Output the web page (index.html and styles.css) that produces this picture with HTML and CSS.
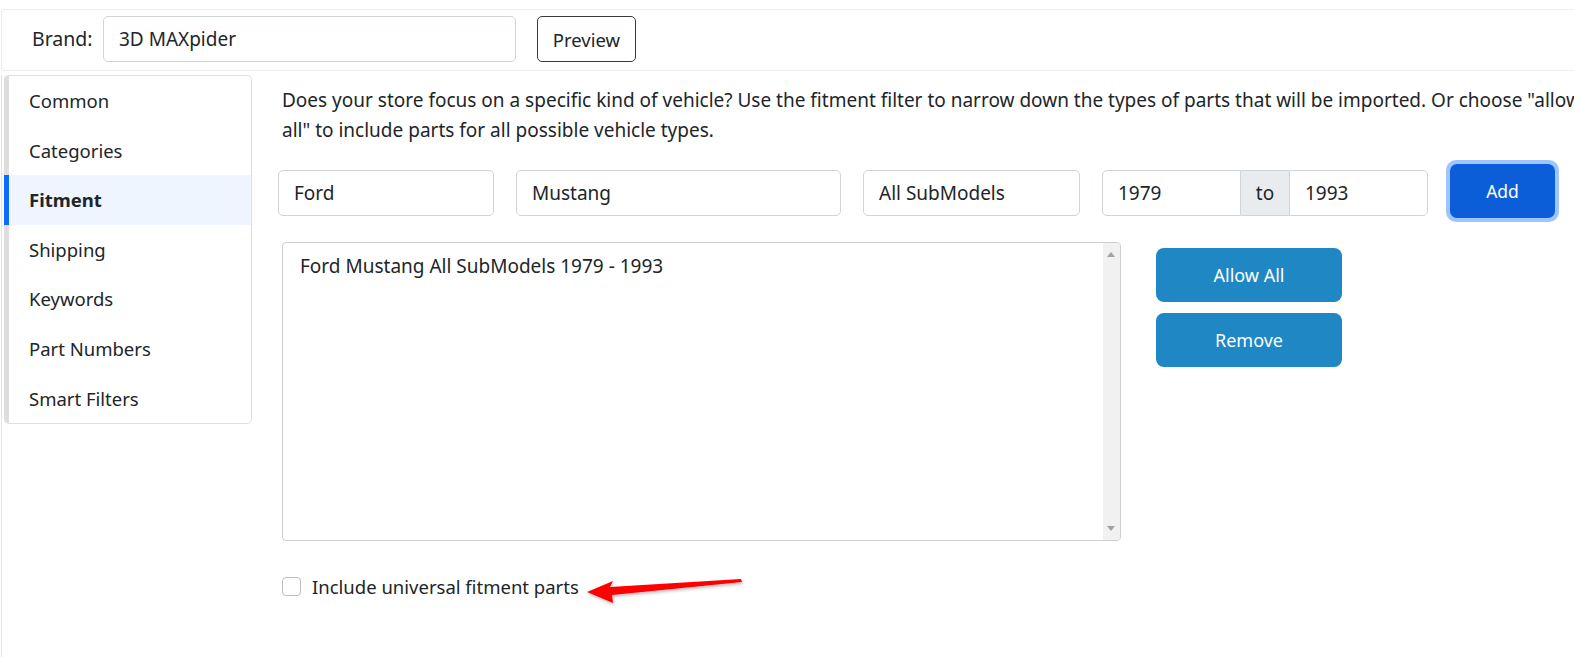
FILE: index.html
```html
<!DOCTYPE html>
<html lang="en">
<head>
<meta charset="utf-8">
<title>Fitment</title>
<link rel="stylesheet" href="styles.css">
</head>
<body>
<div class="topbar">
  <span class="brand-label">Brand:</span>
  <div class="field brand-input">3D MAXpider</div>
  <button class="btn-outline">Preview</button>
</div>
<div class="layout">
  <nav class="sidenav">
    <div class="nav-item">Common</div>
    <div class="nav-item">Categories</div>
    <div class="nav-item active">Fitment</div>
    <div class="nav-item">Shipping</div>
    <div class="nav-item">Keywords</div>
    <div class="nav-item">Part Numbers</div>
    <div class="nav-item">Smart Filters</div>
  </nav>
  <main class="content">
    <p class="intro">Does your store focus on a specific kind of vehicle? Use the fitment filter to narrow down the types of parts that will be imported. Or choose "allow all" to include parts for all possible vehicle types.</p>
    <div class="filter-row">
      <div class="field f-make">Ford</div>
      <div class="field f-model">Mustang</div>
      <div class="field f-sub">All SubModels</div>
      <div class="year-group">
        <div class="field year">1979</div>
        <div class="addon">to</div>
        <div class="field year">1993</div>
      </div>
      <div class="focus-ring"><button class="btn-add">Add</button></div>
    </div>
    <div class="list-row">
      <div class="listbox">
        <div class="list-items">
          <div class="list-item">Ford Mustang All SubModels 1979 - 1993</div>
        </div>
        <div class="scrollbar">
          <span class="arrow-up"></span>
          <span class="arrow-down"></span>
        </div>
      </div>
      <div class="actions">
        <button class="btn-blue">Allow All</button>
        <button class="btn-blue">Remove</button>
      </div>
    </div>
    <label class="check">
      <span class="check-box"></span>
      <span class="check-text">Include universal fitment parts</span>
    </label>
  </main>
</div>
<svg class="annot-arrow" width="175" height="44" viewBox="0 0 175 44">
  <defs>
    <filter id="sh" x="-10%" y="-40%" width="130%" height="200%">
      <feDropShadow dx="1" dy="2" stdDeviation="1.6" flood-color="#000" flood-opacity="0.25"/>
    </filter>
  </defs>
  <polygon filter="url(#sh)" fill="#ff0000" points="7,20 33,9 30,15 161,7 162,10 32,23 33,31"/>
</svg>
</body>
</html>
```

FILE: styles.css
```css
* { box-sizing: border-box; }
html, body { margin: 0; padding: 0; background: #fff; }
body {
  font-family: "Noto Sans", "Segoe UI", Arial, sans-serif;
  color: #212529;
  font-size: 19px;
  width: 1574px;
  height: 657px;
  overflow: hidden;
  position: relative;
}
button { font-family: inherit; }

.topbar {
  margin-top: 9px;
  margin-left: 1px;
  height: 62px;
  border: 1px solid #ececec;
  border-right: none;
  border-radius: 4px 0 0 4px;
  display: flex;
  align-items: flex-start;
  padding: 6px 0 0 30px;
}
.brand-label {
  height: 46px;
  line-height: 46px;
  font-size: 19.5px;
  width: 71px;
}
.field {
  height: 46px;
  border: 1px solid #ced4da;
  border-radius: 5px;
  background: #fff;
  padding: 0 15px;
  line-height: 44px;
  font-size: 19px;
  white-space: nowrap;
}
.brand-input { width: 413px; }
.btn-outline {
  margin-left: 21px;
  width: 99px;
  height: 46px;
  border: 1px solid #343a40;
  border-radius: 5px;
  background: #fff;
  color: #212529;
  font-size: 18.5px;
  padding: 0;
}

.layout {
  display: flex;
  align-items: flex-start;
  margin-left: 1px;
  margin-top: 4px;
  border-left: 1px solid #e4e4e4;
  height: 600px;
  padding-left: 2px;
}
.sidenav {
  width: 248px;
  flex: none;
  border: 1px solid #dfdfdf;
  border-left: 5px solid #dedede;
  border-radius: 5px;
  padding: 0;
}
.nav-item {
  height: 49.6px;
  line-height: 50.5px;
  padding-left: 20px;
  font-size: 18.5px;
  margin-left: -5px;
  border-left: 5px solid transparent;
}
.nav-item.active {
  background: #eef5ff;
  border-left-color: #0d6efd;
  font-weight: 700;
}

.content {
  flex: none;
  width: 1400px;
  margin-left: 26px;
}
.intro {
  margin: 11px 0 0 4px;
  line-height: 29.5px;
  font-size: 19px;
  width: 1305px;
}
.filter-row {
  display: flex;
  align-items: center;
  margin-top: 16px;
  height: 64px;
}
.f-make { width: 216px; }
.f-model { width: 325px; margin-left: 22px; }
.f-sub { width: 217px; margin-left: 22px; }
.year-group {
  display: flex;
  margin-left: 22px;
  width: 326px;
}
.year-group .field.year { width: 139px; }
.year-group .field.year:first-child { border-radius: 5px 0 0 5px; }
.year-group .field.year:last-child { border-radius: 0 5px 5px 0; }
.addon {
  width: 48px;
  height: 46px;
  line-height: 44px;
  text-align: center;
  background: #e9ecef;
  border-top: 1px solid #ced4da;
  border-bottom: 1px solid #ced4da;
  font-size: 19px;
}
.focus-ring {
  margin-left: 18px;
  margin-top: -5px;
  padding: 4px;
  background: #9ec5fe;
  border-radius: 10px;
}
.btn-add {
  display: block;
  width: 105px;
  height: 54px;
  border: none;
  border-radius: 7px;
  background: #0b5ed7;
  color: #fff;
  font-size: 17.5px;
  padding: 0;
}

.list-row {
  display: flex;
  align-items: flex-start;
  margin-top: 17px;
  margin-left: 4px;
}
.listbox {
  width: 839px;
  height: 299px;
  border: 1px solid #cfcfcf;
  border-radius: 4px;
  display: flex;
  overflow: hidden;
}
.list-items {
  flex: 1;
  padding: 10px 0 0 17px;
}
.list-item {
  font-size: 19px;
  line-height: 26px;
}
.scrollbar {
  width: 17px;
  background: #f1f1f1;
  position: relative;
}
.arrow-up, .arrow-down {
  position: absolute;
  left: 4px;
  width: 0; height: 0;
  border-left: 4px solid transparent;
  border-right: 4px solid transparent;
}
.arrow-up { top: 9px; border-bottom: 5px solid #a3a3a3; }
.arrow-down { bottom: 9px; border-top: 5px solid #a3a3a3; }

.actions {
  margin-left: 35px;
  margin-top: 6px;
  display: flex;
  flex-direction: column;
  gap: 11px;
}
.btn-blue {
  width: 186px;
  height: 54px;
  border: none;
  border-radius: 8px;
  background: #1f87c4;
  color: #fff;
  font-size: 18px;
  padding: 0;
}

.check {
  display: flex;
  align-items: center;
  margin-top: 33px;
  margin-left: 4px;
}
.check-box {
  width: 19px;
  height: 19px;
  border: 1px solid #bdbdbd;
  border-radius: 4px;
  background: #fff;
}
.check-text {
  margin-left: 11px;
  font-size: 18.5px;
}

.annot-arrow {
  position: absolute;
  left: 580px;
  top: 572px;
}
```
